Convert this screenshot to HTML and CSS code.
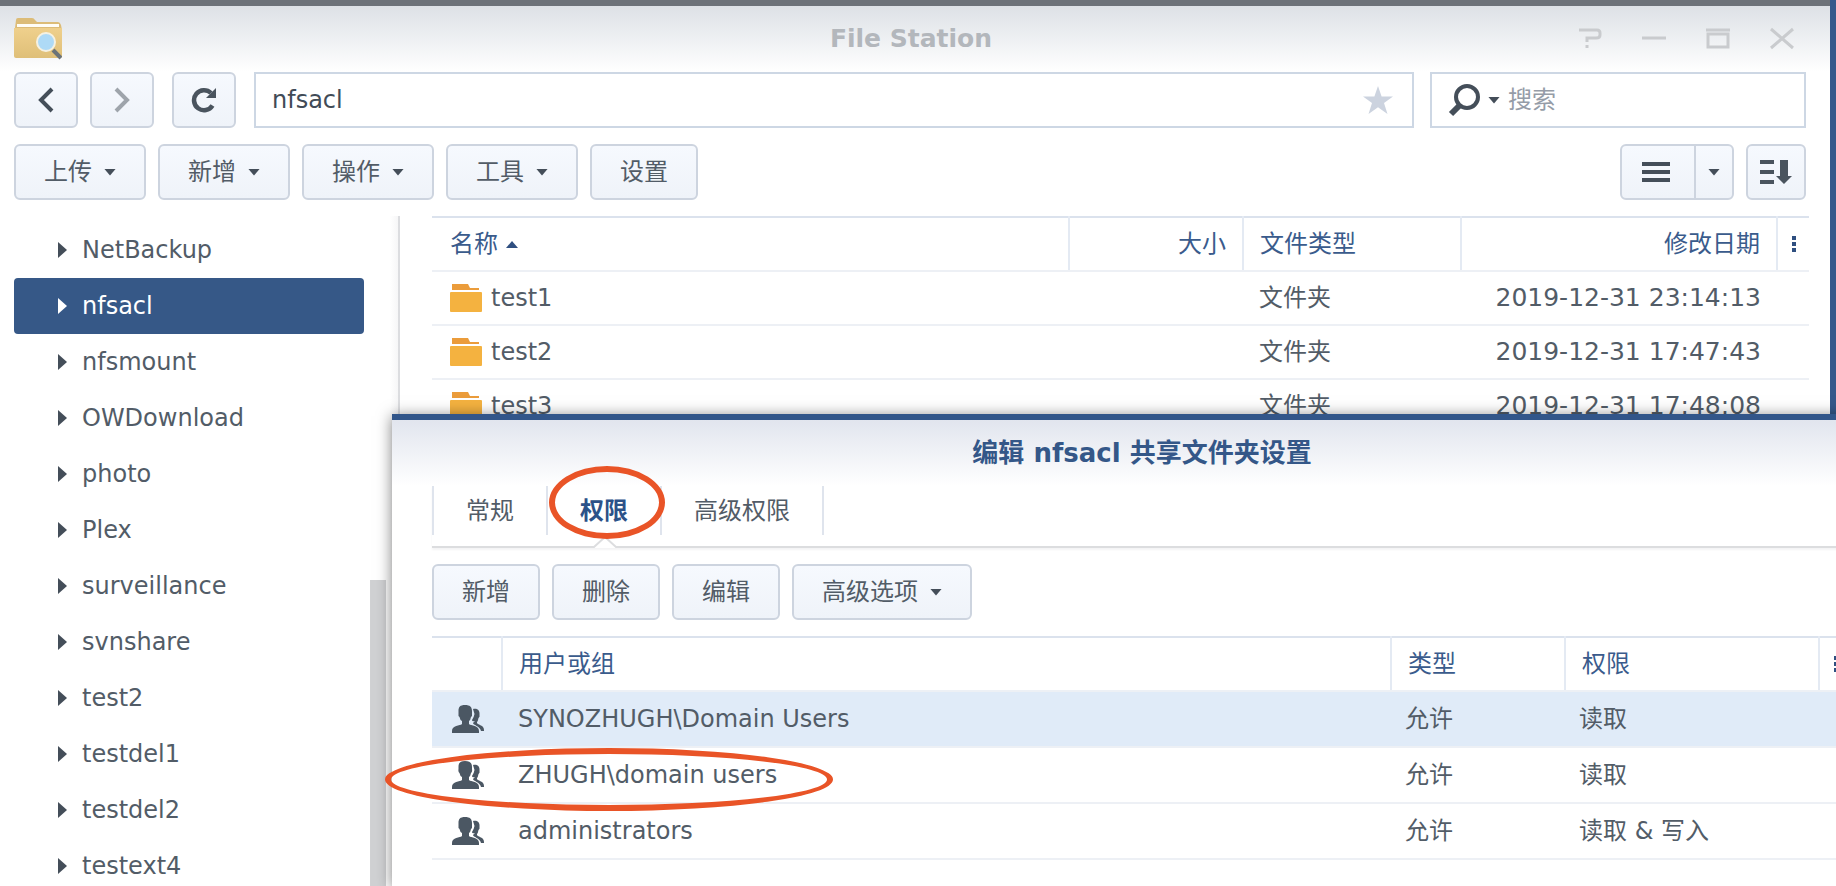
FILE: index.html
```
<!DOCTYPE html>
<html lang="zh-CN">
<head>
    <meta charset="UTF-8">
    <meta name="viewport" content="width=device-width, initial-scale=1.0">
    <title>File Station</title>
    <link rel="stylesheet" href="styles.css">
</head>
<body>
    <!-- File Station window -->
    <div class="window">
        <header class="window-header">
            <svg class="app-icon" width="48" height="42" viewBox="0 0 48 42">
                <defs>
                    <linearGradient id="folderFill" x1="0" y1="0" x2="0" y2="1">
                        <stop offset="0" stop-color="#efd08c"/>
                        <stop offset="1" stop-color="#dfbf78"/>
                    </linearGradient>
                </defs>
                <path d="M1 10L2 2Q2 0 4 0H18Q20 0 21 2L23 4H44Q46 4 47 7L48 12H0z" fill="#dcbc78"/>
                <rect x="3" y="6" width="42" height="3" fill="#fffdf6"/>
                <path d="M0 10H48V38Q48 40 46 40H2Q0 40 0 38z" fill="url(#folderFill)"/>
                <path d="M39 32L47 40" stroke="#6b7378" stroke-width="4"/>
                <circle cx="32" cy="24" r="9" fill="#aedaf6" stroke="#f5f1e2" stroke-width="2"/>
            </svg>
            <h1>File Station</h1>
            <div class="window-controls">
                <button aria-label="帮助"><svg width="24" height="24" viewBox="0 0 24 24"><path d="M1 3H19Q22 3 22 6V8Q22 11 18 11H9V15M9 18V21" fill="none" stroke="#c9cbce" stroke-width="3"/></svg></button>
                <button aria-label="最小化"><svg width="24" height="24" viewBox="0 0 24 24"><path d="M0 11H24" stroke="#c9cbce" stroke-width="3"/></svg></button>
                <button aria-label="最大化"><svg width="24" height="24" viewBox="0 0 24 24"><path d="M0 3H24" stroke="#c9cbce" stroke-width="3"/><path d="M2 7H22V20H2z" fill="none" stroke="#c9cbce" stroke-width="3"/></svg></button>
                <button aria-label="关闭"><svg width="24" height="24" viewBox="0 0 24 24"><path d="M1 2L23 21M23 2L1 21" stroke="#c9cbce" stroke-width="3"/></svg></button>
            </div>
        </header>

        <!-- navigation -->
        <div class="nav-bar">
            <button class="btn btn-icon" aria-label="后退"><svg width="16" height="26" viewBox="0 0 16 26"><path d="M14 2L3 13L14 24" fill="none" stroke="#444e59" stroke-width="4"/></svg></button>
            <button class="btn btn-icon" aria-label="前进"><svg width="16" height="26" viewBox="0 0 16 26"><path d="M2 2L13 13L2 24" fill="none" stroke="#9ea4ab" stroke-width="4"/></svg></button>
            <button class="btn btn-icon btn-refresh" aria-label="刷新"><svg width="26" height="26" viewBox="0 0 26 26"><path d="M21.500 18.500A10 10 0 1 1 20 6" fill="none" stroke="#4a545e" stroke-width="4.500"/><path d="M25 1V11H15z" fill="#4a545e"/></svg></button>
            <div class="field path-field">
                <input type="text" value="nfsacl" aria-label="路径">
                <button aria-label="收藏"><svg width="30" height="28" viewBox="0 0 30 28"><path d="M15 0L18.600 10.500H30L21 17L24.500 28L15 21.300L5.500 28L9 17L0 10.500H11.400z" fill="#ccd3df"/></svg></button>
            </div>
            <div class="field search-field">
                <label for="search"><svg width="32" height="34" viewBox="0 0 32 34"><circle cx="19" cy="14" r="11" fill="none" stroke="#444e59" stroke-width="4"/><path d="M11 23L3 31" stroke="#444e59" stroke-width="6"/></svg></label>
                <button aria-label="搜索选项"><span class="caret"></span></button>
                <input type="text" id="search" placeholder="搜索">
            </div>
        </div>

        <!-- toolbar -->
        <div class="toolbar">
            <button class="btn">上传<span class="caret"></span></button>
            <button class="btn">新增<span class="caret"></span></button>
            <button class="btn">操作<span class="caret"></span></button>
            <button class="btn">工具<span class="caret"></span></button>
            <button class="btn">设置</button>
            <div class="view-group">
                <button class="btn btn-view" aria-label="列表视图"><svg width="28" height="22" viewBox="0 0 28 22"><path d="M0 3H28M0 11H28M0 19H28" stroke="#444e59" stroke-width="4"/></svg></button>
                <button class="btn btn-view-menu" aria-label="视图选项"><span class="caret"></span></button>
            </div>
            <button class="btn btn-sort" aria-label="排序"><svg width="32" height="26" viewBox="0 0 32 26"><path d="M0 3H14M0 13H14M0 23H14" stroke="#4a545e" stroke-width="4"/><path d="M20 1H28V17H32L24 25L16 17H20z" fill="#4a545e"/></svg></button>
        </div>

        <div class="main">
            <!-- folder tree -->
            <nav class="tree">
                <ul>
                    <li><a href="#">NetBackup</a></li>
                    <li><a href="#" class="selected">nfsacl</a></li>
                    <li><a href="#">nfsmount</a></li>
                    <li><a href="#">OWDownload</a></li>
                    <li><a href="#">photo</a></li>
                    <li><a href="#">Plex</a></li>
                    <li><a href="#">surveillance</a></li>
                    <li><a href="#">svnshare</a></li>
                    <li><a href="#">test2</a></li>
                    <li><a href="#">testdel1</a></li>
                    <li><a href="#">testdel2</a></li>
                    <li><a href="#">testext4</a></li>
                </ul>
                <div class="scrollbar"></div>
            </nav>

            <!-- file list -->
            <div class="files">
                <table class="grid file-grid">
                    <colgroup>
                        <col>
                        <col class="col-size">
                        <col class="col-type">
                        <col class="col-date">
                        <col class="col-menu">
                    </colgroup>
                    <thead>
                        <tr>
                            <th>名称<span class="caret caret-up"></span></th>
                            <th class="right">大小</th>
                            <th>文件类型</th>
                            <th class="right">修改日期</th>
                            <th class="menu"><svg width="4" height="16" viewBox="0 0 4 16"><path d="M0 0H4V4H0zM0 6H4V10H0zM0 12H4V16H0z" fill="#2f4f80"/></svg></th>
                        </tr>
                    </thead>
                    <tbody>
                        <tr>
                            <td><span class="file-name"><svg width="32" height="28" viewBox="0 0 32 28"><use href="#folder"/></svg>test1</span></td>
                            <td></td>
                            <td>文件夹</td>
                            <td class="right date">2019-12-31 23:14:13</td>
                            <td></td>
                        </tr>
                        <tr>
                            <td><span class="file-name"><svg width="32" height="28" viewBox="0 0 32 28"><use href="#folder"/></svg>test2</span></td>
                            <td></td>
                            <td>文件夹</td>
                            <td class="right date">2019-12-31 17:47:43</td>
                            <td></td>
                        </tr>
                        <tr>
                            <td><span class="file-name"><svg width="32" height="28" viewBox="0 0 32 28"><use href="#folder"/></svg>test3</span></td>
                            <td></td>
                            <td>文件夹</td>
                            <td class="right date">2019-12-31 17:48:08</td>
                            <td></td>
                        </tr>
                    </tbody>
                </table>
            </div>
        </div>
    </div>

    <!-- shared folder settings dialog -->
    <div class="dialog" role="dialog" aria-labelledby="dialogTitle">
        <h2 id="dialogTitle">编辑 nfsacl 共享文件夹设置</h2>
        <div class="dialog-body">
            <div class="tabs">
                <button>常规</button>
                <button class="active">权限<span class="mark mark-tab"></span><svg class="notch" width="28" height="12" viewBox="0 0 28 12"><path d="M0 12V10L4 10L14 1L24 10L28 10V12z" fill="#fff"/><path d="M0 11H3L14 1L25 11H28" fill="none" stroke="#dcdddf" stroke-width="2"/></svg></button>
                <button>高级权限</button>
            </div>
            <div class="dialog-toolbar">
                <button class="btn">新增</button>
                <button class="btn">删除</button>
                <button class="btn">编辑</button>
                <button class="btn">高级选项<span class="caret"></span></button>
            </div>
            <table class="grid perm-grid">
                <colgroup>
                    <col class="col-icon">
                    <col>
                    <col class="col-kind">
                    <col class="col-perm">
                    <col class="col-menu-wide">
                </colgroup>
                <thead>
                    <tr>
                        <th></th>
                        <th>用户或组</th>
                        <th>类型</th>
                        <th>权限</th>
                        <th class="menu"><svg width="4" height="16" viewBox="0 0 4 16"><path d="M0 0H4V4H0zM0 6H4V10H0zM0 12H4V16H0z" fill="#2f4f80"/></svg></th>
                    </tr>
                </thead>
                <tbody>
                    <tr class="selected">
                        <td><svg width="32" height="28" viewBox="0 0 32 28"><use href="#group"/></svg></td>
                        <td>SYNOZHUGH\Domain Users</td>
                        <td>允许</td>
                        <td>读取</td>
                        <td></td>
                    </tr>
                    <tr>
                        <td><svg width="32" height="28" viewBox="0 0 32 28"><use href="#group"/></svg><span class="mark mark-row"></span></td>
                        <td>ZHUGH\domain users</td>
                        <td>允许</td>
                        <td>读取</td>
                        <td></td>
                    </tr>
                    <tr>
                        <td><svg width="32" height="28" viewBox="0 0 32 28"><use href="#group"/></svg></td>
                        <td>administrators</td>
                        <td>允许</td>
                        <td>读取 &amp; 写入</td>
                        <td></td>
                    </tr>
                </tbody>
            </table>
        </div>
    </div>

    <svg class="symbols" width="0" height="0">
        <symbol id="folder" viewBox="0 0 32 28">
            <path d="M2 0H18L20 4H29V6H2z" fill="#eb9c3b"/>
            <rect y="8" width="32" height="20" rx="1" fill="#f4b240"/>
        </symbol>
        <symbol id="group" viewBox="0 0 32 28">
            <path d="M13 0C18 0 20 2 20 6V8Q20.500 11 19 12Q18.500 15 17 16V19C19 21 27 20 27 26V28H0V26C0 20 8 21 10 19V16Q8 15 7.500 12Q6 11 6.500 8V6C6.500 2 8 0 13 0z" fill="#4b5763"/>
            <path d="M21 4C26 3 28 6 27.500 10Q28 12 26.500 13Q26 16 25 17V18C26 20 32 20 32 25V26H29C28 21 21 20 21 18L23 16Q20 17 20 15Q22 12 22.500 9z" fill="#4b5763"/>
        </symbol>
    </svg>
</body>
</html>
```
FILE: styles.css
```
* {
    box-sizing: border-box;
}
body {
    position: relative;
    height: 100vh;
    margin: 0;
    padding-right: 6px;
    overflow: hidden;
    background-color: #35598b;
    color: #525c67;
    font: 24px/32px "DejaVu Sans", "Noto Sans CJK SC", sans-serif;
}
button, input {
    font: inherit;
    color: inherit;
}
button {
    padding: 0;
    border: none;
    background: none;
    cursor: pointer;
}
svg {
    display: block;
    flex-shrink: 0;
}
h1, h2, ul {
    margin: 0;
    padding: 0;
}
.symbols {
    position: absolute;
}

/* window */
.window {
    display: flex;
    flex-direction: column;
    height: 100%;
    border-top: 6px solid #6d7279;
    background-color: #fff;
}
.window-header {
    display: grid;
    grid-template-columns: 1fr auto 1fr;
    align-items: center;
    height: 66px;
    padding: 0 22px 0 14px;
    background: linear-gradient(#dde1e6, #fff);
}
.window-header h1 {
    font-size: 25px;
    color: #b3b7bc;
}
.window-controls {
    display: flex;
    justify-content: flex-end;
    gap: 40px;
    padding-right: 14px;
}

/* buttons */
.btn {
    display: flex;
    align-items: center;
    justify-content: center;
    gap: 12px;
    height: 56px;
    padding: 0 28px;
    border: 2px solid #cdd4df;
    border-radius: 6px;
    background: linear-gradient(#f6f9fe, #eff3f9);
}
.btn-icon {
    width: 64px;
    padding: 0;
}
.caret {
    width: 12px;
    height: 7px;
    background-color: #444e59;
    clip-path: polygon(0 0, 100% 0, 50% 100%);
}
.caret-up {
    display: inline-block;
    margin: 0 0 4px 8px;
    background-color: #2f4f80;
    clip-path: polygon(50% 0, 100% 100%, 0 100%);
}

/* navigation */
.nav-bar {
    display: flex;
    gap: 12px;
    padding: 0 24px 0 14px;
}
.btn-refresh {
    margin: 0 6px;
}
.field {
    display: flex;
    align-items: center;
    height: 56px;
    border: 2px solid #cdd7e4;
    background-color: #fff;
}
.field input {
    flex: 1;
    min-width: 0;
    padding: 0;
    border: none;
    outline: none;
    background: none;
}
.path-field {
    flex: 1;
    padding: 0 19px 0 16px;
}
.path-field input {
    color: #414b57;
}
.search-field {
    width: 376px;
    margin-left: 4px;
    padding-left: 16px;
    gap: 8px;
}
.search-field input::placeholder {
    color: #959ca7;
    opacity: 1;
}
.search-field button {
    display: flex;
}

/* toolbar */
.toolbar {
    display: flex;
    gap: 12px;
    padding: 16px 24px 0 14px;
}
.view-group {
    display: flex;
    margin-left: auto;
}
.btn-view {
    width: 76px;
    padding: 0 4px 0 0;
    border-radius: 6px 0 0 6px;
}
.btn-view-menu {
    width: 40px;
    margin-left: -2px;
    padding: 0;
    border-radius: 0 6px 6px 0;
}
.btn-sort {
    width: 60px;
    padding: 0;
}

/* folder tree */
.main {
    display: flex;
    flex: 1;
    min-height: 0;
    padding-top: 16px;
}
.tree {
    position: relative;
    flex: 0 0 400px;
    padding: 6px 34px 0 14px;
    border-right: 2px solid #dcdde0;
    background: linear-gradient(to left, #f6f6f7, #fff 8px);
    overflow: hidden;
}
.tree ul {
    list-style: none;
}
.tree a {
    display: flex;
    align-items: center;
    gap: 15px;
    height: 56px;
    padding-left: 44px;
    border-radius: 4px;
    color: inherit;
    text-decoration: none;
}
.tree a::before {
    content: "";
    width: 9px;
    height: 16px;
    background-color: #444e59;
    clip-path: polygon(0 0, 100% 50%, 0 100%);
}
.tree a.selected {
    background-color: #365887;
    color: #fff;
}
.tree a.selected::before {
    background-color: #fff;
}
.scrollbar {
    position: absolute;
    top: 364px;
    bottom: 0;
    right: 12px;
    width: 16px;
    background-color: #d0d1d3;
}

/* tables */
.files {
    flex: 1;
    padding: 0 21px 0 32px;
}
.grid {
    width: 100%;
    border-collapse: collapse;
    table-layout: fixed;
    border-top: 2px solid #dbe2ed;
}
.grid th, .grid td {
    height: 54px;
    padding: 0 16px;
    border-bottom: 2px solid #edf0f5;
    font-weight: normal;
    text-align: left;
    white-space: nowrap;
}
.grid th {
    color: #3a5b8c;
    border-right: 2px solid #e4eaf3;
}
.grid th:last-child {
    border-right: none;
}
.grid .right {
    text-align: right;
}
.grid .date {
    font-size: 25px;
}
.grid th.menu {
    padding: 0 14px;
}
.file-name {
    display: flex;
    align-items: center;
    gap: 9px;
}
.file-grid th:first-child, .file-grid td:first-child {
    padding-left: 18px;
}
.col-size {
    width: 174px;
}
.col-type {
    width: 218px;
}
.col-date {
    width: 316px;
}
.col-menu {
    width: 32px;
}

/* dialog */
.dialog {
    position: absolute;
    top: 414px;
    bottom: 0;
    left: 392px;
    right: -56px;
    border-top: 6px solid #32568a;
    background-color: #fff;
    box-shadow: 0 2px 14px rgba(0, 0, 0, 0.5);
}
.dialog h2 {
    height: 66px;
    background: linear-gradient(#e1e5ee, #fff);
    color: #345788;
    font-size: 26px;
    line-height: 66px;
    text-align: center;
}
.dialog-body {
    padding: 0 32px 0 40px;
}
.tabs {
    display: flex;
    padding-bottom: 11px;
    border-bottom: 2px solid #dcdddf;
    box-shadow: 0 2px 2px #f4f4f5;
}
.tabs button {
    position: relative;
    height: 49px;
    padding: 0 32px;
    border-left: 2px solid #dfe4ed;
}
.tabs button:last-child {
    border-right: 2px solid #dfe4ed;
}
.tabs .active {
    color: #2c5288;
    font-weight: bold;
}
.notch {
    position: absolute;
    left: 43px;
    bottom: -13px;
}
.dialog-toolbar {
    display: flex;
    gap: 12px;
    padding: 16px 0;
}
.perm-grid td {
    height: 56px;
    padding-left: 14px;
}
.perm-grid td:first-child {
    position: relative;
    padding: 0 20px;
}
.perm-grid td:nth-child(2) {
    padding-left: 16px;
}
.perm-grid .selected {
    background-color: #e0ebf8;
}
.col-icon {
    width: 70px;
}
.col-kind {
    width: 174px;
}
.col-perm {
    width: 254px;
}
.col-menu-wide {
    width: 41px;
}

/* highlight rings */
.mark {
    position: absolute;
    z-index: 1;
    border: 6px solid #e95427;
    border-radius: 50%;
}
.mark-tab {
    top: -20px;
    left: 1px;
    width: 116px;
    height: 73px;
}
.mark-row {
    top: 0;
    left: -47px;
    width: 448px;
    height: 63px;
}
```
